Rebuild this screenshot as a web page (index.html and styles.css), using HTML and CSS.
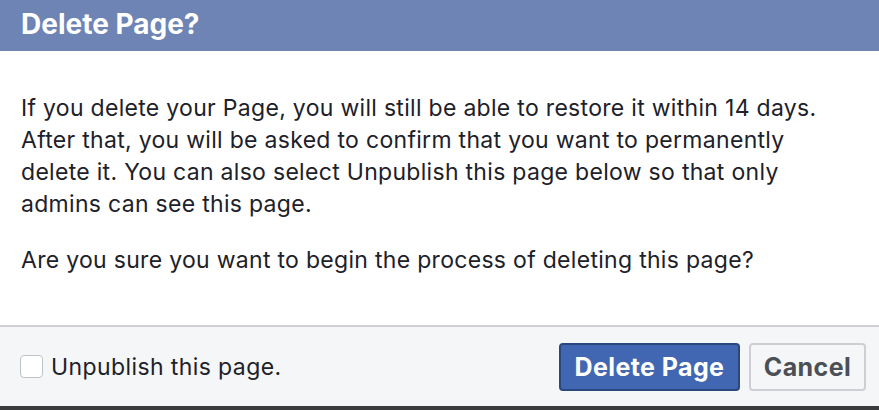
FILE: index.html
```html
<!DOCTYPE html>
<html lang="en">
<head>
    <meta charset="UTF-8">
    <title>Delete Page?</title>
    <link rel="stylesheet" href="styles.css">
</head>
<body>
    <div class="dialog">
        <header class="dialog-title">Delete Page?</header>
        <div class="dialog-body">
            <p>If you delete your Page, you will still be able to restore it within 14 days. After that, you will be asked to confirm that you want to permanently delete it. You can also select Unpublish this page below so that only admins can see this page.</p>
            <p>Are you sure you want to begin the process of deleting this page?</p>
        </div>
        <div class="dialog-footer">
            <label class="unpublish"><input type="checkbox"><span class="box"></span>Unpublish this page.</label>
            <div class="actions">
                <button class="btn btn-primary">Delete Page</button>
                <button class="btn btn-cancel">Cancel</button>
            </div>
        </div>
    </div>
</body>
</html>
```

FILE: styles.css
```css
body { margin: 0; font-family: Inter, "Liberation Sans", sans-serif; color: #1d2129; background: #fff; }
.dialog { width: 879px; height: 410px; display: flex; flex-direction: column; border-bottom: 4px solid #3a3b3d; box-sizing: border-box; }
.dialog-title { background: #6d84b4; color: #fff; font-weight: bold; font-size: 28px; height: 51px; line-height: 48px; padding: 0 21px; box-sizing: border-box; }
.dialog-body { padding: 41px 0 0 21px; width: 820px; font-size: 23px; letter-spacing: 0.3px; line-height: 32px; height: 274px; box-sizing: border-box; }
.dialog-body p { margin: 0 0 24px; }
.dialog-footer { flex: 1; background: #f5f6f7; border-top: 2px solid #ced0d4; display: flex; align-items: center; justify-content: space-between; padding: 0 13px 0 20px; }
.unpublish { display: flex; align-items: center; font-size: 23px; letter-spacing: 0.4px; color: #1d2129; }
.unpublish input { display: none; }
.box { width: 21px; height: 21px; border: 1px solid #bec3c9; border-radius: 4px; background: #fff; margin-right: 8px; }
.actions { display: flex; gap: 9px; }
.btn { font-family: inherit; font-weight: bold; font-size: 25px; letter-spacing: 0.4px; height: 48px; padding: 0; border: 2px solid #ccd0d5; border-radius: 4px; background: #f5f6f7; color: #4b4f56; cursor: pointer; }
.btn-primary { background: #4267b2; border-color: #29487d; color: #fff; width: 181px; }
.btn-cancel { width: 117px; }
```
